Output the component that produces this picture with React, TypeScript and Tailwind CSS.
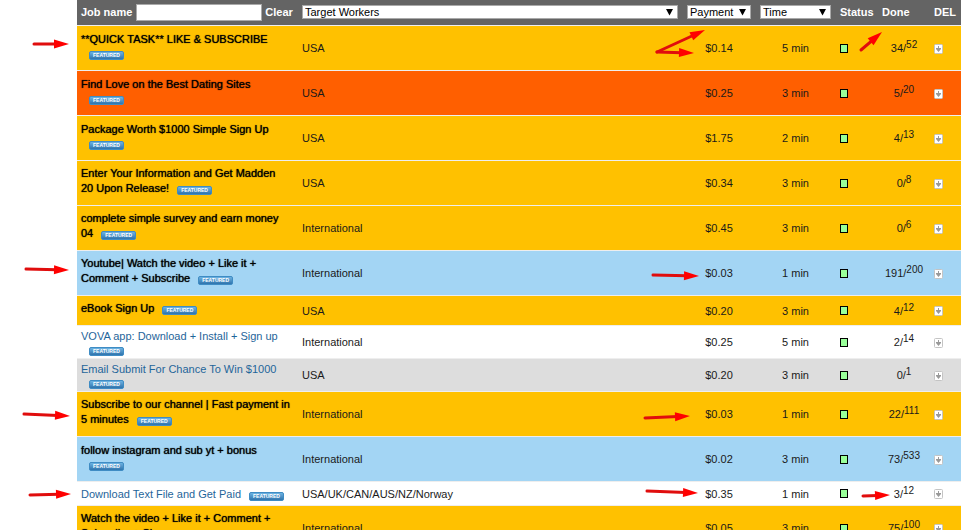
import type {ReactNode} from 'react';

type Tone = 'gold' | 'orange' | 'blue' | 'white' | 'gray';

type Job = {
    title: string[];
    badgeBelow?: boolean;
    workers: string;
    payment: string;
    minutes: number;
    done: number;
    total: number;
    tone: Tone;
    height: string;
};

const TONES: Record<Tone, string> = {
    gold: 'bg-[#ffc100]',
    orange: 'bg-[#ff5f00]',
    blue: 'bg-[#a3d5f4]',
    white: 'bg-white',
    gray: 'bg-[#dddddd]',
};

const JOBS: Job[] = [
    {title: ['**QUICK TASK** LIKE & SUBSCRIBE'], badgeBelow: true, workers: 'USA', payment: '$0.14', minutes: 5, done: 34, total: 52, tone: 'gold', height: 'h-[45px]'},
    {title: ['Find Love on the Best Dating Sites'], badgeBelow: true, workers: 'USA', payment: '$0.25', minutes: 3, done: 5, total: 20, tone: 'orange', height: 'h-[45px]'},
    {title: ['Package Worth $1000 Simple Sign Up'], badgeBelow: true, workers: 'USA', payment: '$1.75', minutes: 2, done: 4, total: 13, tone: 'gold', height: 'h-[45px]'},
    {title: ['Enter Your Information and Get Madden', '20 Upon Release!'], workers: 'USA', payment: '$0.34', minutes: 3, done: 0, total: 8, tone: 'gold', height: 'h-[45px]'},
    {title: ['complete simple survey and earn money', '04'], workers: 'International', payment: '$0.45', minutes: 3, done: 0, total: 6, tone: 'gold', height: 'h-[45px]'},
    {title: ['Youtube| Watch the video + Like it +', 'Comment + Subscribe'], workers: 'International', payment: '$0.03', minutes: 1, done: 191, total: 200, tone: 'blue', height: 'h-[45px]'},
    {title: ['eBook Sign Up'], workers: 'USA', payment: '$0.20', minutes: 3, done: 4, total: 12, tone: 'gold', height: 'h-[30px]'},
    {title: ['VOVA app: Download + Install + Sign up'], badgeBelow: true, workers: 'International', payment: '$0.25', minutes: 5, done: 2, total: 14, tone: 'white', height: 'h-[33px]'},
    {title: ['Email Submit For Chance To Win $1000'], badgeBelow: true, workers: 'USA', payment: '$0.20', minutes: 3, done: 0, total: 1, tone: 'gray', height: 'h-[33px]'},
    {title: ['Subscribe to our channel | Fast payment in', '5 minutes'], workers: 'International', payment: '$0.03', minutes: 1, done: 22, total: 111, tone: 'gold', height: 'h-[45px]'},
    {title: ['follow instagram and sub yt + bonus'], badgeBelow: true, workers: 'International', payment: '$0.02', minutes: 3, done: 73, total: 533, tone: 'blue', height: 'h-[45px]'},
    {title: ['Download Text File and Get Paid'], workers: 'USA/UK/CAN/AUS/NZ/Norway', payment: '$0.35', minutes: 1, done: 3, total: 12, tone: 'white', height: 'h-[24px]'},
    {title: ['Watch the video + Like it + Comment +', 'Subscribe + Share'], workers: 'International', payment: '$0.05', minutes: 3, done: 75, total: 100, tone: 'gold', height: 'h-[45px]'},
];

// [tail x, tail y, tip x, tip y]
const ARROWS = [
    [34, 44, 69, 44],
    [657, 52, 705, 30],
    [657, 52, 694, 53],
    [861, 50, 882, 32],
    [26, 269, 69, 270],
    [653, 275, 699, 276],
    [24, 414, 70, 416],
    [645, 418, 690, 416],
    [30, 495, 71, 494],
    [647, 491, 698, 493],
    [863, 496, 890, 495],
];

export default function App() {
    return (
        <div className="relative h-screen overflow-hidden bg-white font-['Liberation_Sans',Arial,sans-serif] text-[11px] leading-[13px] text-[#1a1a1a]">
            <div className="pl-[77px] pr-1">
                <table className="w-full table-fixed border-collapse">
                    <colgroup>
                        <col className="w-[222px]"/>
                        <col/>
                        <col className="w-[72px]"/>
                        <col className="w-[81px]"/>
                        <col className="w-[42px]"/>
                        <col className="w-[52px]"/>
                        <col className="w-[31px]"/>
                    </colgroup>
                    <thead>
                        <tr className="h-[25px] border-b border-[#eeeeee] bg-[#646464] text-left text-white">
                            <th className="p-0 pl-1">
                                <div className="flex items-center">
                                    <label htmlFor="job-name" className="whitespace-nowrap">Job name</label>
                                    <input id="job-name" type="text" className="ml-1 h-[17px] w-[126px] border border-[#a9a9a9] bg-white px-1 font-normal text-black"/>
                                    <button type="button" className="ml-[3px] font-bold">Clear</button>
                                </div>
                            </th>
                            <th className="p-0 pl-[3px] pr-[5px]"><Filter label="Target Workers"/></th>
                            <th className="p-0 px-1"><Filter label="Payment"/></th>
                            <th className="p-0 px-[5px]"><Filter label="Time"/></th>
                            <th className="p-0 pl-1">Status</th>
                            <th className="p-0 pl-1">Done</th>
                            <th className="p-0 pl-1">DEL</th>
                        </tr>
                    </thead>
                    <tbody>
                        {JOBS.map((job) => <JobRow key={job.title[0]} job={job}/>)}
                    </tbody>
                </table>
            </div>
            <Arrows/>
        </div>
    );
}

function Filter({label}: {label: string}) {
    return (
        <div className="relative">
            <select aria-label={label} className="block h-[14px] w-full appearance-none border border-[#a9a9a9] bg-white pl-[2px] text-[11px] leading-3 font-normal text-black">
                <option>{label}</option>
            </select>
            <svg className="pointer-events-none absolute top-1 right-1" width="8" height="7" viewBox="0 0 8 7" aria-hidden="true">
                <path d="M0 0h7L3.500 6.500z" fill="#000"/>
            </svg>
        </div>
    );
}

function JobRow({job}: {job: Job}) {
    const plain = job.tone === 'white' || job.tone === 'gray';

    return (
        <tr className={`${TONES[job.tone]} ${job.height} border-b border-[#eeeeee]`}>
            <td className={plain ? 'p-0 pt-[2px] pl-1' : 'p-0 pb-1 pl-1'}>
                <Title plain={plain}>
                    {job.title.map((line, i) => (
                        <span key={line}>{i > 0 && <br/>}{line}</span>
                    ))}
                </Title>
                {job.badgeBelow && <br/>}
                <Badge/>
            </td>
            <td className="p-0 pt-[2px] pl-[3px]">{job.workers}</td>
            <td className="p-0 pt-[2px] text-center">{job.payment}</td>
            <td className="p-0 pt-[2px] text-center">{job.minutes} min</td>
            <td className="p-0 pt-px pl-1">
                <span className="block h-[9px] w-2 border border-black bg-[#99ff99]"/>
            </td>
            <td className="p-0 pt-[2px] text-center">
                {job.done}/<sup className="-top-1 text-[10px]">{job.total}</sup>
            </td>
            <td className="p-0 pt-[2px] pl-1"><DeleteButton/></td>
        </tr>
    );
}

function Title({plain, children}: {plain: boolean; children: ReactNode}) {
    return (
        <a
            href="#"
            className={plain
                ? 'whitespace-nowrap text-[#1f659a]'
                : 'whitespace-nowrap leading-[15px] text-black [text-shadow:0_0_1px_#000]'}
        >
            {children}
        </a>
    );
}

function Badge() {
    return (
        <span className="ml-2 inline-block h-[9px] w-[35px] rounded-[2px] border border-[#3f8cc4] bg-linear-to-b from-[#6db3e2] to-[#2f74ad] text-center align-[0px] text-[5px] leading-[7px] font-bold text-white">
            FEATURED
        </span>
    );
}

function DeleteButton() {
    return (
        <button type="button" aria-label="Delete" className="block">
            <svg width="9" height="10" viewBox="0 0 9 10">
                <rect x="0.5" y="0.5" width="8" height="9" rx="1" fill="#fff" stroke="#c4c4c4"/>
                <path d="M4 2h1v2h2v1L4.500 8 2 5v-1h2z" fill="#999"/>
            </svg>
        </button>
    );
}

function Arrows() {
    return (
        <svg className="pointer-events-none absolute top-0 left-0" width="965" height="530" viewBox="0 0 965 530" aria-hidden="true">
            {ARROWS.map(([x1, y1, x2, y2]) => {
                const length = Math.hypot(x2 - x1, y2 - y1);
                const angle = Math.atan2(y2 - y1, x2 - x1) * 180 / Math.PI;
                return (
                    <g key={`${x1}-${y1}-${y2}`} transform={`translate(${x1} ${y1}) rotate(${angle})`}>
                        <path d={`M0 0H${length - 12}`} stroke="#e00d0d" strokeWidth="3" strokeLinecap="round"/>
                        <path d={`M${length} 0l-15 -4.500v9z`} fill="#ff0000"/>
                    </g>
                );
            })}
        </svg>
    );
}
